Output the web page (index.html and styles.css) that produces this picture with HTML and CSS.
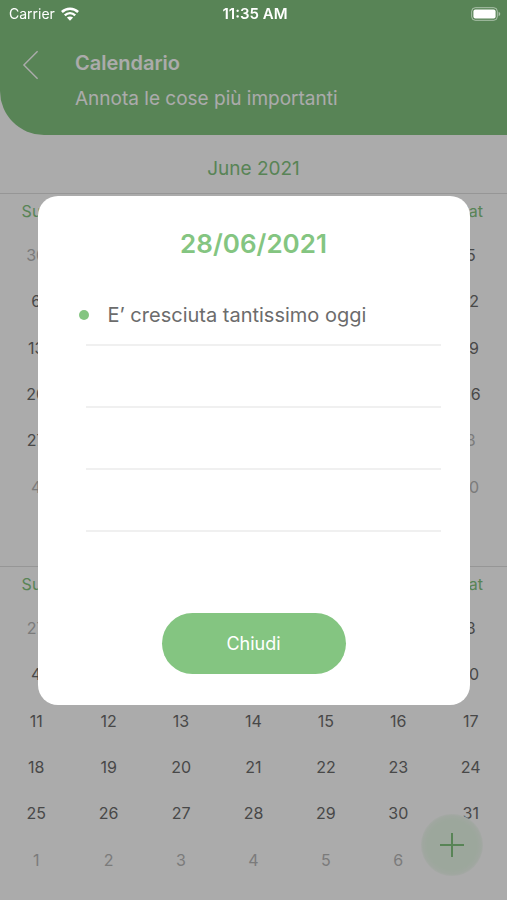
FILE: index.html
```html
<!DOCTYPE html>
<html lang="it">
<head>
<meta charset="utf-8">
<meta name="viewport" content="width=device-width, initial-scale=1">
<title>Calendario</title>
<link rel="stylesheet" href="styles.css">
</head>
<body>
<div class="status">
  <div class="status-left">
    <span>Carrier</span>
    <svg class="wifi" viewBox="0 0 18 14" aria-hidden="true">
      <path d="M0.9 5C5.4 0.6 12.6 0.6 17.1 5" fill="none" stroke="#fff" stroke-width="2.5"/>
      <path d="M3.8 8.3C6.8 5.4 11.2 5.4 14.2 8.3" fill="none" stroke="#fff" stroke-width="2.4"/>
      <path d="M5.9 10.6C7.7 9 10.3 9 12.1 10.6L9 13.7Z" fill="#fff"/>
    </svg>
  </div>
  <span class="time">11:35 AM</span>
  <div class="status-right">
    <svg class="battery" viewBox="0 0 30 14" aria-hidden="true">
      <rect x="0.7" y="0.7" width="25.6" height="12.6" rx="3.6" fill="none" stroke="#fff" stroke-opacity=".5" stroke-width="1"/>
      <rect x="2.4" y="2.4" width="22.2" height="9.2" rx="2" fill="#fff"/>
      <path d="M27.6 4.8C29.8 5.6 29.8 8.4 27.6 9.2Z" fill="#fff" fill-opacity=".5"/>
    </svg>
  </div>
</div>

<header class="header">
  <button class="back" type="button" aria-label="Indietro">
    <svg viewBox="0 0 18 32" aria-hidden="true"><path d="M16.5 1.5L2 16L16.5 30.5" fill="none" stroke="#fff" stroke-width="1.5"/></svg>
  </button>
  <div>
    <h1>Calendario</h1>
    <p>Annota le cose più importanti</p>
  </div>
</header>

<main>
  <h2 class="month">June 2021</h2>
  <table class="calendar">
    <thead><tr><th>Sun</th><th>Mon</th><th>Tue</th><th>Wed</th><th>Thu</th><th>Fri</th><th>Sat</th></tr></thead>
    <tbody>
      <tr><td class="out">30</td><td class="out">31</td><td>1</td><td>2</td><td>3</td><td>4</td><td>5</td></tr>
      <tr><td>6</td><td>7</td><td>8</td><td>9</td><td>10</td><td>11</td><td>12</td></tr>
      <tr><td>13</td><td>14</td><td>15</td><td>16</td><td>17</td><td>18</td><td>19</td></tr>
      <tr><td>20</td><td>21</td><td>22</td><td>23</td><td>24</td><td>25</td><td>26</td></tr>
      <tr><td>27</td><td>28</td><td>29</td><td>30</td><td class="out">1</td><td class="out">2</td><td class="out">3</td></tr>
      <tr><td class="out">4</td><td class="out">5</td><td class="out">6</td><td class="out">7</td><td class="out">8</td><td class="out">9</td><td class="out">10</td></tr>
    </tbody>
  </table>
  <table class="calendar">
    <thead><tr><th>Sun</th><th>Mon</th><th>Tue</th><th>Wed</th><th>Thu</th><th>Fri</th><th>Sat</th></tr></thead>
    <tbody>
      <tr><td class="out">27</td><td class="out">28</td><td class="out">29</td><td class="out">30</td><td>1</td><td>2</td><td>3</td></tr>
      <tr><td>4</td><td>5</td><td>6</td><td>7</td><td>8</td><td>9</td><td>10</td></tr>
      <tr><td>11</td><td>12</td><td>13</td><td>14</td><td>15</td><td>16</td><td>17</td></tr>
      <tr><td>18</td><td>19</td><td>20</td><td>21</td><td>22</td><td>23</td><td>24</td></tr>
      <tr><td>25</td><td>26</td><td>27</td><td>28</td><td>29</td><td>30</td><td>31</td></tr>
      <tr><td class="out">1</td><td class="out">2</td><td class="out">3</td><td class="out">4</td><td class="out">5</td><td class="out">6</td><td></td></tr>
    </tbody>
  </table>
</main>

<button class="add" type="button" aria-label="Aggiungi">
  <svg viewBox="0 0 26 26" aria-hidden="true"><path d="M13 1V25M1 13H25" fill="none" stroke="#84c581" stroke-width="2"/></svg>
</button>

<div class="overlay">
  <section class="modal" role="dialog" aria-labelledby="day">
    <h2 id="day">28/06/2021</h2>
    <ul class="notes">
      <li class="filled">E’ cresciuta tantissimo oggi</li>
      <li></li>
      <li></li>
      <li></li>
    </ul>
    <button class="close" type="button">Chiudi</button>
  </section>
</div>
</body>
</html>
```

FILE: styles.css
```css
* {
  box-sizing: border-box;
}

:root {
  --green: #84c581;
}

html {
  height: 100%;
  overflow: hidden;
}

body {
  margin: 0;
  height: 100%;
  overflow: hidden;
  background: #fff;
  color: #6c6c6c;
  font-family: Inter, "Liberation Sans", sans-serif;
}

h1,
h2,
p,
ul {
  margin: 0;
  padding: 0;
}

button {
  border: 0;
  padding: 0;
  background: none;
  font: inherit;
}

svg {
  display: block;
}

/* Status bar, kept above the dimmed page */
.status {
  position: fixed;
  top: 0;
  left: 0;
  right: 0;
  z-index: 3;
  display: grid;
  grid-template-columns: 1fr auto 1fr;
  align-items: center;
  height: 27px;
  padding: 0 6px 0 9px;
  color: #fff;
  font-size: 14px;
}

.status-left {
  display: flex;
  align-items: center;
  gap: 6px;
}

.wifi {
  width: 18px;
  height: 14px;
}

.time {
  font-size: 15px;
  font-weight: 600;
}

.status-right {
  display: flex;
  justify-content: flex-end;
}

.battery {
  width: 30px;
  height: 14px;
}

.header {
  display: flex;
  align-items: flex-start;
  gap: 36px;
  height: 135px;
  padding: 49px 22px 0;
  border-bottom-left-radius: 44px;
  background: var(--green);
  color: #fff;
}

.back svg {
  width: 17px;
  height: 32px;
}

.header h1 {
  font-size: 20px;
  font-weight: 600;
  line-height: 28px;
}

.header p {
  margin-top: 8px;
  font-size: 19px;
  line-height: 28px;
}

.month {
  padding: 20px 0 10px;
  color: var(--green);
  font-size: 19px;
  font-weight: 400;
  line-height: 28px;
  text-align: center;
}

.calendar {
  width: 100%;
  height: 373px;
  border-top: 1px solid #e0e0e0;
  border-bottom: 56px solid transparent;
  border-collapse: separate;
  border-spacing: 0;
  table-layout: fixed;
  font-size: 16px;
  line-height: 20px;
  text-align: center;
}

.calendar th {
  height: 38px;
  padding: 0 0 4px;
  color: var(--green);
  font-weight: 400;
}

.calendar td {
  padding: 0;
}

.calendar .out {
  color: #b8b8b8;
}

.add {
  position: fixed;
  right: 24px;
  bottom: 24px;
  display: grid;
  place-items: center;
  width: 62px;
  height: 62px;
  border-radius: 50%;
  background: radial-gradient(closest-side, #e9f9e9 80%, #effaef 94%, #f7fcf7);
}

.add svg {
  width: 26px;
  height: 26px;
}

.overlay {
  position: fixed;
  inset: 0;
  z-index: 2;
  display: flex;
  align-items: center;
  justify-content: center;
  background: rgba(0, 0, 0, 0.33);
}

.modal {
  display: flex;
  flex-direction: column;
  width: calc(100% - 75px);
  padding: 30px 29px 31px 48px;
  border-radius: 20px;
  background: #fff;
}

.modal h2 {
  margin-right: 19px;
  color: var(--green);
  font-size: 26px;
  font-weight: 600;
  line-height: 36px;
  text-align: center;
}

.notes {
  margin-top: 22px;
  list-style: none;
}

.notes li {
  position: relative;
  height: 62px;
  padding-left: 22px;
  border-bottom: 2px solid #f0f0f0;
  font-size: 20px;
  line-height: 62px;
}

.notes .filled::before {
  content: "";
  position: absolute;
  top: 26px;
  left: -7px;
  width: 10px;
  height: 10px;
  border-radius: 50%;
  background: var(--green);
}

.close {
  align-self: center;
  width: 184px;
  height: 61px;
  margin-top: 81px;
  margin-right: 19px;
  border-radius: 31px;
  background: var(--green);
  color: #fff;
  font-size: 18px;
}
```
